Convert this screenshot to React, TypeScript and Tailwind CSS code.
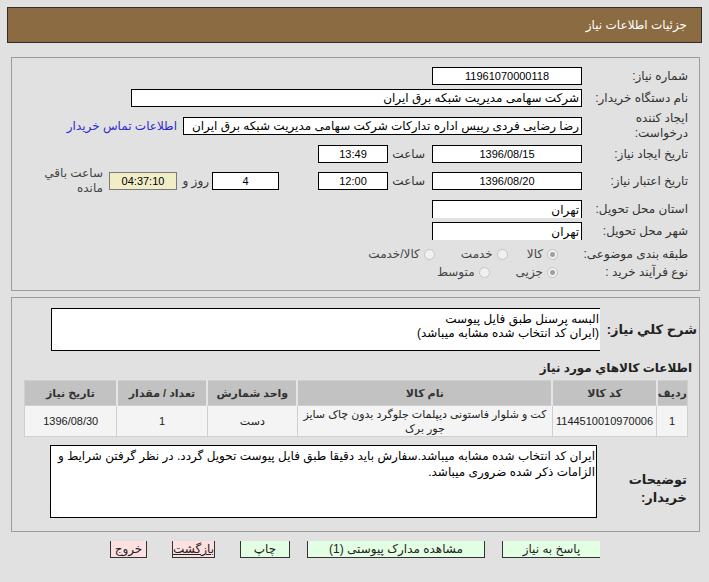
import React from "react";

function Radio({ checked }: { checked?: boolean }) {
  return (
    <span className="w-[11px] h-[11px] rounded-full border border-[#c4c4c4] bg-[#f0f0f0] flex items-center justify-center shrink-0">
      {checked && <span className="w-[5px] h-[5px] rounded-full bg-[#a0a0a0]" />}
    </span>
  );
}

function Opt({ label, checked, className }: { label: string; checked?: boolean; className?: string }) {
  return (
    <div className={"flex items-center gap-[4px] " + (className || "")}>
      <Radio checked={checked} />
      <span className="text-[#444] whitespace-nowrap">{label}</span>
    </div>
  );
}

export default function App() {
  return (
    <div
      dir="rtl"
      className="w-[709px] h-[582px] overflow-hidden bg-[#e1e1e1] pt-[7px] font-['Liberation_Sans','DejaVu_Sans',sans-serif] text-[12px] leading-[14px] text-[#333]"
    >
      {/* header */}
      <div className="mx-[7px] h-[36px] bg-[#8b6c42] border border-[#2e2e2e] flex items-center pr-[14px] text-white text-[12px]">
        جزئیات اطلاعات نیاز
      </div>

      {/* fieldset 1 */}
      <div className="mt-[14px] ml-[11px] mr-[9px] border border-[#9c9c9c] pt-[9px] pr-[11px] pb-[9px] flex flex-col">
        <div className="flex items-center gap-[8px] h-[18px]">
          <div className="w-[98px] whitespace-nowrap">شماره نیاز:</div>
          <div className="w-[150px] h-[18px] border border-black bg-white text-black text-[11px] flex items-center justify-center">11961070000118</div>
        </div>

        <div className="flex items-center gap-[8px] h-[18px] mt-[4px]">
          <div className="w-[98px] whitespace-nowrap">نام دستگاه خریدار:</div>
          <div className="w-[451px] h-[18px] border border-black bg-white text-black flex items-center pr-[2px]">شرکت سهامی مدیریت شبکه برق ایران</div>
        </div>

        <div className="flex items-center gap-[8px] h-[30px] mt-[4px]">
          <div className="w-[98px] leading-[15px]">
            ایجاد کننده
            <br />
            درخواست:
          </div>
          <div className="w-[399px] h-[18px] border border-black bg-white text-black flex items-center pr-[2px] whitespace-nowrap overflow-hidden">
            رضا رضایی فردی رییس اداره تدارکات شرکت سهامی مدیریت شبکه برق ایران
          </div>
          <span className="text-[#2b2bd0] mr-[-2px] whitespace-nowrap">اطلاعات تماس خریدار</span>
        </div>

        <div className="flex items-center h-[18px] mt-[4px]">
          <div className="w-[98px] ml-[8px] whitespace-nowrap">تاریخ ایجاد نیاز:</div>
          <div className="w-[150px] h-[18px] border border-black bg-white text-black text-[11px] flex items-center justify-center">1396/08/15</div>
          <div className="w-[44px] pr-[7px]">ساعت</div>
          <div className="w-[70px] h-[18px] border border-black bg-white text-black text-[11px] flex items-center justify-center">13:49</div>
        </div>

        <div className="flex items-center h-[28px] mt-[4px]">
          <div className="w-[98px] ml-[8px] whitespace-nowrap">تاریخ اعتبار نیاز:</div>
          <div className="w-[150px] h-[18px] border border-black bg-white text-black text-[11px] flex items-center justify-center">1396/08/20</div>
          <div className="w-[44px] pr-[7px]">ساعت</div>
          <div className="w-[70px] h-[18px] border border-black bg-white text-black text-[11px] flex items-center justify-center">12:00</div>
          <div className="w-[67px] h-[18px] mr-[39px] border border-black bg-white text-black text-[11px] flex items-center justify-center">4</div>
          <div className="w-[35px] pr-[3px] whitespace-nowrap">روز و</div>
          <div className="w-[68px] h-[18px] border border-[#7a7a7a] bg-[#f1edc6] text-black text-[11px] flex items-center justify-center">04:37:10</div>
          <div className="mr-[6px] leading-[15px] text-[#444] text-right">
            ساعت باقي
            <br />
            مانده
          </div>
        </div>

        <div className="flex items-center gap-[8px] h-[18px] mt-[5px]">
          <div className="w-[98px] whitespace-nowrap">استان محل تحویل:</div>
          <div className="w-[150px] h-[18px] border-t border-l border-r border-black bg-white text-black flex items-center pr-[2px]">تهران</div>
        </div>

        <div className="flex items-center gap-[8px] h-[18px] mt-[4px]">
          <div className="w-[98px] whitespace-nowrap">شهر محل تحویل:</div>
          <div className="w-[150px] h-[18px] border-t border-l border-r border-black bg-white text-black flex items-center pr-[2px]">تهران</div>
        </div>

        <div className="flex items-center h-[18px] mt-[5px]">
          <div className="w-[98px] ml-[8px] whitespace-nowrap">طبقه بندی موضوعی:</div>
          <Opt label="کالا" checked className="mr-[24px]" />
          <Opt label="خدمت" className="mr-[19px]" />
          <Opt label="کالا/خدمت" className="mr-[26px]" />
        </div>

        <div className="flex items-center h-[18px]">
          <div className="w-[98px] ml-[8px] whitespace-nowrap">نوع فرآیند خرید :</div>
          <Opt label="جزیی" checked className="mr-[24px]" />
          <Opt label="متوسط" className="mr-[26px]" />
        </div>
      </div>

      {/* fieldset 2 */}
      <div className="mt-[6px] ml-[11px] mr-[9px] border border-[#9c9c9c] pt-[10px] pr-[2px] pb-[13px] flex flex-col">
        <div className="flex items-center gap-[3px]">
          <div className="w-[94px] font-bold text-[13px] text-[#222] whitespace-nowrap">شرح کلي نياز:</div>
          <div className="relative w-[549px] h-[43px] border-t border-b border-l border-black bg-white text-black pr-[1px] pt-[3px] leading-[14px]">
            البسه پرسنل طبق فایل پیوست
            <br />
            (ایران کد انتخاب شده مشابه میباشد)
            <span className="absolute left-[2px] bottom-[1px] text-[6px] leading-[6px] text-[#bbb]">⋰</span>
          </div>
        </div>

        <div className="mt-[9px] font-bold text-[12px] leading-[16px] text-[#222] pr-[5px]">اطلاعات کالاهاي مورد نياز</div>

        <table className="mt-[4px] mr-[9px] w-[664px] border-collapse border border-[#d0d0d0] text-[11px]">
          <thead>
            <tr className="h-[25px] bg-[#c2c2c2] text-[#333] font-bold">
              <th className="w-[27px] border-l-[2px] border-[#e6e6e6] font-bold">ردیف</th>
              <th className="w-[104px] border-l-[2px] border-[#e6e6e6] font-bold">کد کالا</th>
              <th className="w-[254px] border-l-[2px] border-[#e6e6e6] font-bold">نام کالا</th>
              <th className="w-[90px] border-l-[2px] border-[#e6e6e6] font-bold">واحد شمارش</th>
              <th className="w-[90px] border-l-[2px] border-[#e6e6e6] font-bold">تعداد / مقدار</th>
              <th className="w-[92px] font-bold">تاریخ نیاز</th>
            </tr>
          </thead>
          <tbody>
            <tr className="h-[31px] bg-[#f4f4f4] text-[#222]">
              <td className="border border-[#cfcfcf] text-center">1</td>
              <td className="border border-[#cfcfcf] text-center">1144510010970006</td>
              <td className="border border-[#cfcfcf] text-center leading-[14px] px-[4px]">
                کت و شلوار فاستونی دیپلمات جلوگرد بدون چاک سایز جور برک
              </td>
              <td className="border border-[#cfcfcf] text-center">دست</td>
              <td className="border border-[#cfcfcf] text-center">1</td>
              <td className="border border-[#cfcfcf] text-center">1396/08/30</td>
            </tr>
          </tbody>
        </table>

        <div className="flex items-start gap-[4px] mt-[8px] pr-[10px]">
          <div className="w-[86px] mt-[26px] font-bold text-[13px] leading-[18px] text-[#222]">
            توضیحات
            <br />
            خریدار:
          </div>
          <div className="relative w-[547px] h-[73px] border border-black bg-white text-black pr-[1px] pt-[2px] leading-[16px]">
            ایران کد انتخاب شده مشابه میباشد.سفارش باید دقیقا  طبق فایل پیوست تحویل گردد. در نظر گرفتن شرایط و الزامات ذکر شده ضروری میباشد.
            <span className="absolute left-[2px] bottom-[1px] text-[6px] leading-[6px] text-[#bbb]">⋰</span>
          </div>
        </div>
      </div>

      {/* buttons */}
      <div className="flex items-center h-[17px] mt-[9px] pr-[109px] text-[12px] text-[#222]">
        <div className="w-[98px] h-[17px] bg-[#e3ffe3] border-l border-b border-[#333] flex items-center justify-center">پاسخ به نیاز</div>
        <div className="w-[178px] h-[17px] mr-[17px] bg-[#e3ffe3] border-l border-r border-b border-[#333] flex items-center justify-center">مشاهده مدارک پیوستی (1)</div>
        <div className="w-[50px] h-[17px] mr-[17px] bg-[#e3ffe3] border-l border-r border-b border-[#333] flex items-center justify-center">چاپ</div>
        <div className="w-[43px] h-[17px] mr-[25px] bg-[#ffe0e0] border-l border-r border-b border-[#333] flex items-center justify-center underline">بازگشت</div>
        <div className="w-[37px] h-[17px] mr-[25px] bg-[#ffe0e0] border-l border-r border-b border-[#333] flex items-center justify-center">خروج</div>
      </div>
    </div>
  );
}
